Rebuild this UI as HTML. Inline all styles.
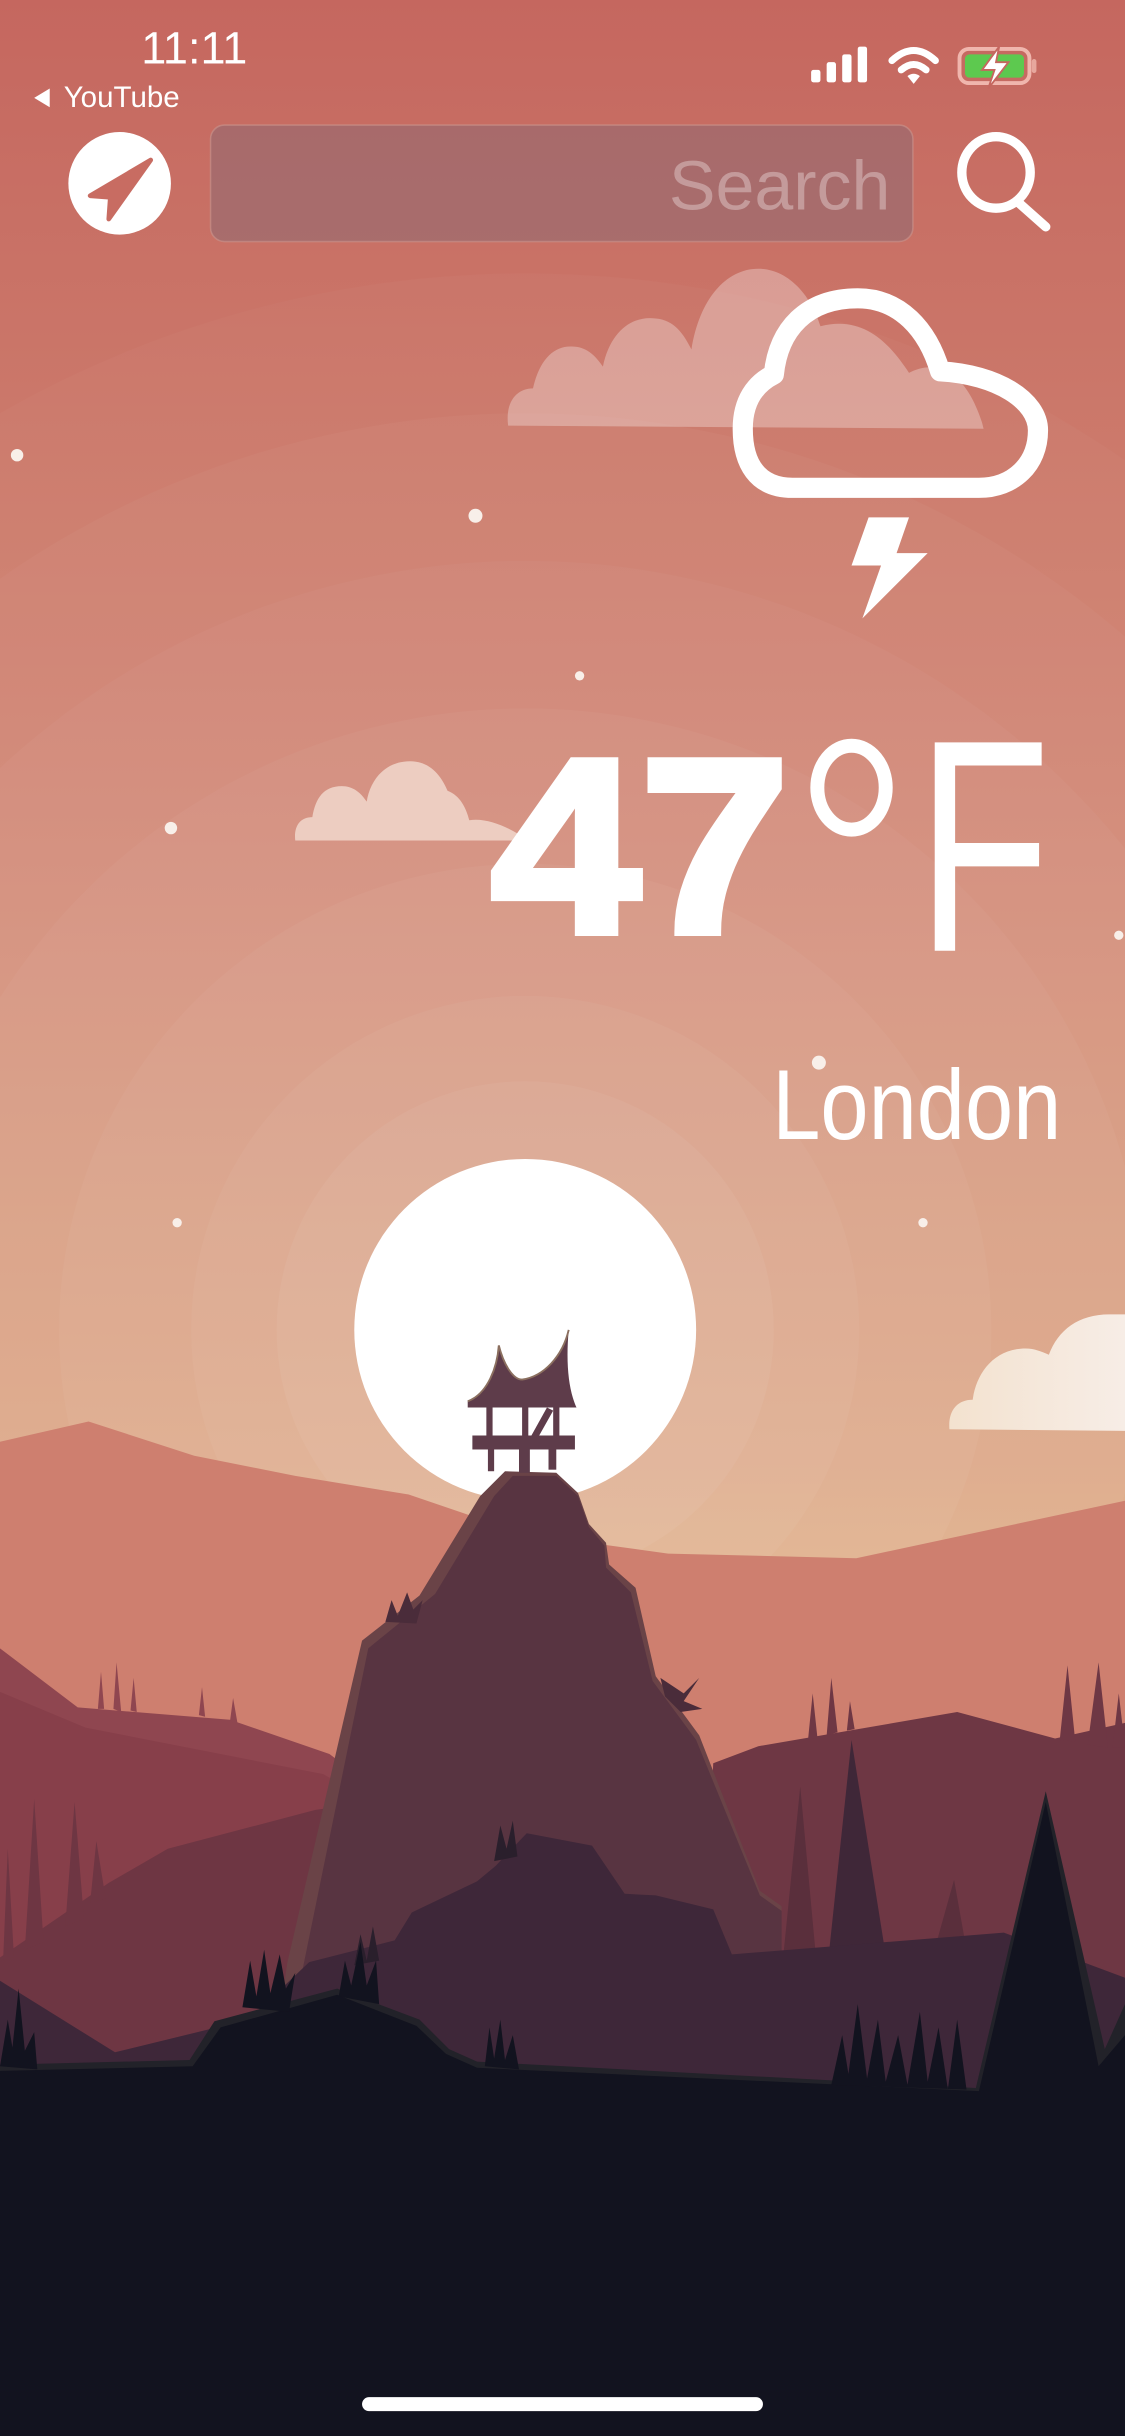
<!DOCTYPE html>
<html><head><meta charset="utf-8"><style>
html,body{margin:0;padding:0;width:1125px;height:2436px;overflow:hidden;background:#12131f}
svg{display:block}
</style></head><body>
<svg width="1125" height="2436" viewBox="0 0 724 1568" preserveAspectRatio="none" xmlns="http://www.w3.org/2000/svg">
<defs>
<linearGradient id="sky" x1="0" y1="0" x2="0" y2="1">
<stop offset="0" stop-color="#c5675f"/>
<stop offset="0.35" stop-color="#d28a76"/>
<stop offset="0.6" stop-color="#dca584"/>
<stop offset="0.7" stop-color="#e1b787"/>
</linearGradient>
<linearGradient id="cl" x1="0" y1="0" x2="1" y2="0">
<stop offset="0" stop-color="#f3e2cf"/><stop offset="1" stop-color="#f7ede6"/>
</linearGradient>
</defs>
<rect width="724" height="1568" fill="url(#sky)"/>
<g fill="#ffffff">
<circle cx="338" cy="856" r="680" opacity="0.025"/>
<circle cx="338" cy="856" r="590" opacity="0.03"/>
<circle cx="338" cy="856" r="495" opacity="0.03"/>
<circle cx="338" cy="856" r="400" opacity="0.035"/>
<circle cx="338" cy="856" r="300" opacity="0.04"/>
<circle cx="338" cy="856" r="215" opacity="0.045"/>
<circle cx="338" cy="856" r="160" opacity="0.05"/>
</g>
<g fill="#f8efe9">
<circle cx="11" cy="293" r="4"/><circle cx="306" cy="332" r="4.5"/><circle cx="373" cy="435" r="3"/>
<circle cx="110" cy="533" r="4"/><circle cx="527" cy="684" r="4.5"/><circle cx="720" cy="602" r="3"/>
<circle cx="114" cy="787" r="3"/><circle cx="594" cy="787" r="3"/>
</g>
<path d="M327 274 C325 258 333 250 343 250 C347 232 356 223 367 223 C373 223 380 224 388 236 C393 212 408 203 422 205 C434 206 440 215 445 225 C450 193 467 173 488 173 C507 173 522 190 528 210 C558 202 575 225 585 240 C600 232 620 235 632 272 L633 276 Z" fill="#ffffff" opacity="0.3"/>
<path d="M190 541 C189 532 193 526 201 526 C203 514 208 506 220 506 C227 506 232 510 236 516 C238 503 247 490 264 490 C275 490 283 497 288 509 C296 512 300 520 302 528 C315 526 330 534 340 541 Z" fill="#f4e0d6" opacity="0.75"/>
<path d="M611 920 C610 908 616 901 626 901 C628 885 639 868 660 868 C666 868 670 870 675 872 C681 856 694 846 714 846 L724 846 L724 921 Z" fill="url(#cl)"/>
<circle cx="338" cy="856" r="110" fill="#ffffff"/>
<path d="M0 928 L57 915 L125 937 L190 950 L263 962 L310 978 L357 990 L430 1000 L551 1003 L724 966 L724 1568 L0 1568 Z" fill="#ce7f6f"/>
<path d="M0 1061 L50 1099 L148 1107 L212 1129 L240 1150 L240 1568 L0 1568 Z" fill="#8f4650"/>
<path d="M0 1089 L55 1112 L208 1142 L240 1160 L240 1568 L0 1568 Z" fill="#873f4a"/>
<g fill="#8f4650">
<path d="M63 1100 L65 1076 L67 1100Z M73 1100 L75 1070 L78 1102Z M84 1101 L86 1080 L88 1102Z M128 1104 L130 1086 L132 1105Z M148 1108 L150 1093 L153 1110Z"/>
</g>
<path d="M0 1260 L70 1212 L108 1190 L203 1165 L240 1160 L240 1568 L0 1568 Z" fill="#6e3643"/>
<g fill="#6e3643">
<path d="M2 1262 L5 1190 L9 1260Z M16 1255 L22 1158 L28 1250Z M42 1240 L48 1160 L54 1235Z M58 1225 L62 1185 L68 1222Z"/>
</g>
<path d="M459 1135 L488 1124 L616 1102 L679 1119 L724 1109 L724 1568 L440 1568 Z" fill="#6e3744"/>
<g fill="#6e3744">
<path d="M520 1120 L523 1090 L526 1118Z M532 1117 L535 1080 L539 1115Z M545 1114 L547 1095 L550 1113Z M682 1120 L687 1072 L692 1121Z M700 1123 L707 1070 L713 1125Z M716 1125 L720 1090 L724 1125Z"/>
<path d="M500 1300 L515 1150 L527 1280Z" fill="#5a2f3c"/>
<path d="M530 1290 L548 1120 L575 1290Z" fill="#3f2738"/>
<path d="M600 1260 L614 1210 L622 1255Z" fill="#5a2f3c"/>
</g>
<path d="M309 963 L325 947 L358 948 L372 961 L379 981 L390 993 L392 1007 L409 1022 L422 1079 L450 1117 L489 1217 L503 1227 L503 1330 L175 1330 L185 1263 L233 1056 L270 1027 Z" fill="#6a4347"/>
<path d="M318 963 L330 950 L358 950 L372 963 L379 983 L389 995 L390 1009 L406 1025 L420 1082 L448 1120 L489 1220 L503 1230 L503 1330 L182 1330 L237 1061 L280 1026 Z" fill="#583441"/>
<g fill="#4a2c3a">
<path d="M425 1080 L440 1090 L450 1080 L440 1095 L452 1100 L438 1102 L428 1092Z"/>
<path d="M248 1044 L252 1030 L256 1040 L262 1025 L266 1036 L272 1030 L268 1045Z"/>
</g>
<g fill="#5e3c4a">
<path d="M301 902 C314 897 320 880 321 866 C324 878 330 888 336 888 C350 886 362 873 366 856 C364 878 366 895 371 906 L301 906 Z"/>
<rect x="313" y="905" width="4" height="20"/><rect x="336" y="905" width="4" height="20"/><rect x="356" y="905" width="4" height="20"/>
<path d="M342 924 L352 906 L356 908 L347 924Z"/>
<rect x="304" y="924" width="66" height="9"/>
<rect x="314" y="932" width="4" height="15"/><rect x="334" y="932" width="7" height="16"/><rect x="353" y="932" width="5" height="14"/>
</g>
<path d="M301 902 C314 897 320 880 321 866 C324 878 330 888 336 888 C350 886 362 873 366 856" fill="none" stroke="#8b6f5f" stroke-width="1.2"/>
<path d="M199 1263 L254 1249 L265 1231 L307 1211 L319 1201 L339 1180 L381 1188 L402 1219 L422 1220 L459 1229 L471 1258 L646 1244 L724 1273 L724 1568 L0 1568 L0 1275 L74 1321 L160 1300 Z" fill="#3e2739"/>
<g fill="#2a1f2c">
<path d="M318 1198 L322 1175 L326 1190 L330 1172 L333 1195Z"/>
<path d="M228 1265 L232 1245 L236 1262 L240 1240 L244 1262Z"/>
</g>
<path d="M0 1329 L122 1326 L138 1301 L217 1280 L270 1300 L289 1319 L307 1327 L628 1344 L673 1153 L711 1319 L724 1290 L724 1568 L0 1568 Z" fill="#222229"/>
<path d="M0 1333 L124 1330 L142 1305 L217 1284 L268 1304 L287 1322 L307 1331 L630 1346 L673 1160 L707 1330 L724 1310 L724 1568 L0 1568 Z" fill="#12131f"/>
<g fill="#12131f">
<path d="M156 1292 L161 1262 L165 1285 L170 1255 L174 1283 L180 1258 L184 1280 L190 1270 L186 1295Z"/>
<path d="M218 1285 L222 1262 L226 1278 L232 1250 L236 1278 L242 1262 L244 1290Z"/>
<path d="M0 1330 L5 1300 L8 1318 L12 1280 L16 1320 L22 1308 L24 1332Z"/>
<path d="M312 1330 L315 1305 L318 1325 L322 1300 L325 1326 L330 1310 L334 1332Z"/>
<path d="M535 1342 L542 1310 L546 1335 L552 1290 L558 1338 L565 1300 L570 1340 L578 1310 L584 1342 L592 1295 L597 1340 L604 1305 L610 1345 L616 1300 L622 1345Z"/>
</g>
<text x="125" y="41" text-anchor="middle" font-family="Liberation Sans, sans-serif" font-size="29" fill="#fff">11:11</text>
<path d="M22 63 L32 57 L32 69 Z" fill="#fff"/>
<text x="41" y="69" font-family="Liberation Sans, sans-serif" font-size="19" fill="#fff">YouTube</text>
<g fill="#fff">
<rect x="522" y="45" width="6" height="8" rx="1.5"/><rect x="532" y="40" width="6" height="13" rx="1.5"/>
<rect x="542" y="35" width="6" height="18" rx="1.5"/><rect x="552" y="30" width="6" height="23" rx="1.5"/>
</g>
<g fill="none" stroke="#fff" stroke-width="4.5" stroke-linecap="round">
<path d="M574 39 Q588 26 602 39"/><path d="M580 45 Q588 38 596 45"/>
</g>
<path d="M584 49 L588 54 L592 49 Q588 46 584 49Z" fill="#fff"/>
<rect x="617.5" y="31.5" width="45" height="22" rx="6" fill="none" stroke="#f0b6ad" stroke-width="2.5"/>
<rect x="621" y="35" width="38" height="15" rx="3" fill="#5dc94f"/>
<rect x="664" y="38" width="3" height="9" rx="1.5" fill="#e7a79d"/>
<path d="M643 30 L632 45 L640 45 L636 57 L649 40 L641 40 Z" fill="#fff" stroke="#c5675f" stroke-width="1.2"/>
<circle cx="77" cy="118" r="33" fill="#fff"/>
<path d="M97 103 L58 126 L71 127 L70 141 Z" fill="#c86c62" stroke="#c86c62" stroke-width="3" stroke-linejoin="round"/>
<rect x="135.5" y="80.5" width="452" height="75" rx="9" fill="#8e6a72" fill-opacity="0.55" stroke="#c9958d" stroke-opacity="0.6"/>
<text x="573" y="135" text-anchor="end" font-family="Liberation Sans, sans-serif" font-size="45" fill="#fff" fill-opacity="0.32">Search</text>
<ellipse cx="641" cy="111" rx="22" ry="23" fill="none" stroke="#fff" stroke-width="6"/>
<path d="M655 130 L673 146" stroke="#fff" stroke-width="6" stroke-linecap="round"/>
<path d="M510 314 C487 314 478 298 478 276 C478 258 486 247 498 241 C501 212 519 192 552 192 C579 192 597 212 605 239 C642 241 668 258 668 277 C668 299 652 314 630 314 Z" fill="none" stroke="#fff" stroke-width="13" stroke-linejoin="round"/>
<path d="M559 333 L585 333 L577 356 L597 356 L555 398 L567 364 L548 364 Z" fill="#fff"/>
<text x="316" y="600" font-family="Liberation Sans, sans-serif" font-size="160" font-weight="bold" fill="#fff" stroke="#fff" stroke-width="5" stroke-linejoin="miter" textLength="192" lengthAdjust="spacingAndGlyphs">47</text>
<ellipse cx="548" cy="507" rx="22" ry="27" fill="none" stroke="#fff" stroke-width="9"/>
<text x="590" y="612" font-family="Liberation Sans, sans-serif" font-size="195" fill="#fff" textLength="86" lengthAdjust="spacingAndGlyphs">F</text>
<text x="497" y="733" font-family="Liberation Sans, sans-serif" font-size="64" fill="#fff" textLength="186" lengthAdjust="spacingAndGlyphs">London</text>
<rect x="233" y="1543" width="258" height="9" rx="4.5" fill="#fff"/>
</svg>
</body></html>
